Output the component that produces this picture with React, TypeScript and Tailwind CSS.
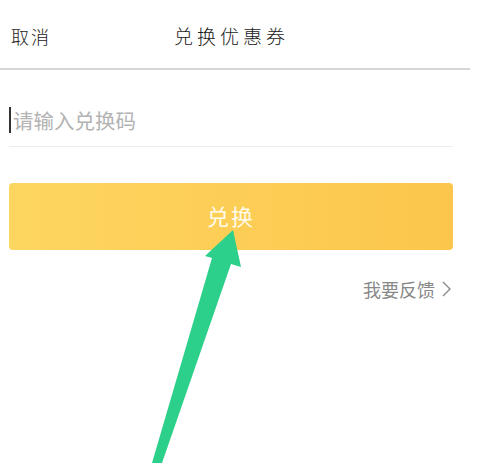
import React from 'react';

const cjk = '"Noto Sans CJK SC", "Noto Sans", sans-serif';

const App: React.FC = () => {
  return (
    <div className="w-[481px] h-[463px] bg-white relative overflow-hidden" style={{ fontFamily: cjk }}>
      {/* header */}
      <div className="w-[470px]">
        <div className="grid grid-cols-[1fr_auto_1fr] items-center w-[463px] h-[68px] pt-[3px]">
          <span className="pl-[11px] text-[18px] tracking-[2px] text-[#1a1a1a] font-light leading-none">取消</span>
          <span className="text-[19px] tracking-[4px] text-[#1a1a1a] font-light leading-none">兑换优惠券</span>
          <span />
        </div>
        <div className="h-[2px] bg-[#d6d6d6]" />
      </div>

      <div className="px-[9px] w-[462px]">
        {/* input */}
        <div className="h-[77px] pt-[37px] border-b border-[#ececec]">
          <div className="flex items-center h-[26px]">
            <div className="w-[2px] h-[26px] bg-[#333] mr-[2px]" />
            <span className="text-[20.5px] text-[#b3b3b3] leading-none">请输入兑换码</span>
          </div>
        </div>

        {/* button */}
        <button className="mt-[36px] w-full h-[67px] rounded-[4px] bg-gradient-to-r from-[#fdd660] to-[#fcc64c] flex items-center justify-center">
          <span className="text-[22px] tracking-[2px] text-[#fffbea] leading-none pb-[3px]">兑换</span>
        </button>

        {/* feedback */}
        <div className="flex justify-end items-center mt-[30px] text-[#888] leading-none">
          <span className="text-[18px]">我要反馈</span>
          <svg width="12" height="18" viewBox="0 0 12 18" className="ml-[6px]">
            <path d="M2 2 L9 9 L2 16" fill="none" stroke="#8a8a8a" strokeWidth="1.4" />
          </svg>
        </div>
      </div>

      {/* annotation arrow */}
      <svg width="481" height="463" className="absolute inset-0 pointer-events-none">
        <polygon
          points="233,230 241,267 231,264 162,463 152,463 212,258 205,256"
          fill="#2dd08b"
        />
      </svg>
    </div>
  );
};

export default App;
